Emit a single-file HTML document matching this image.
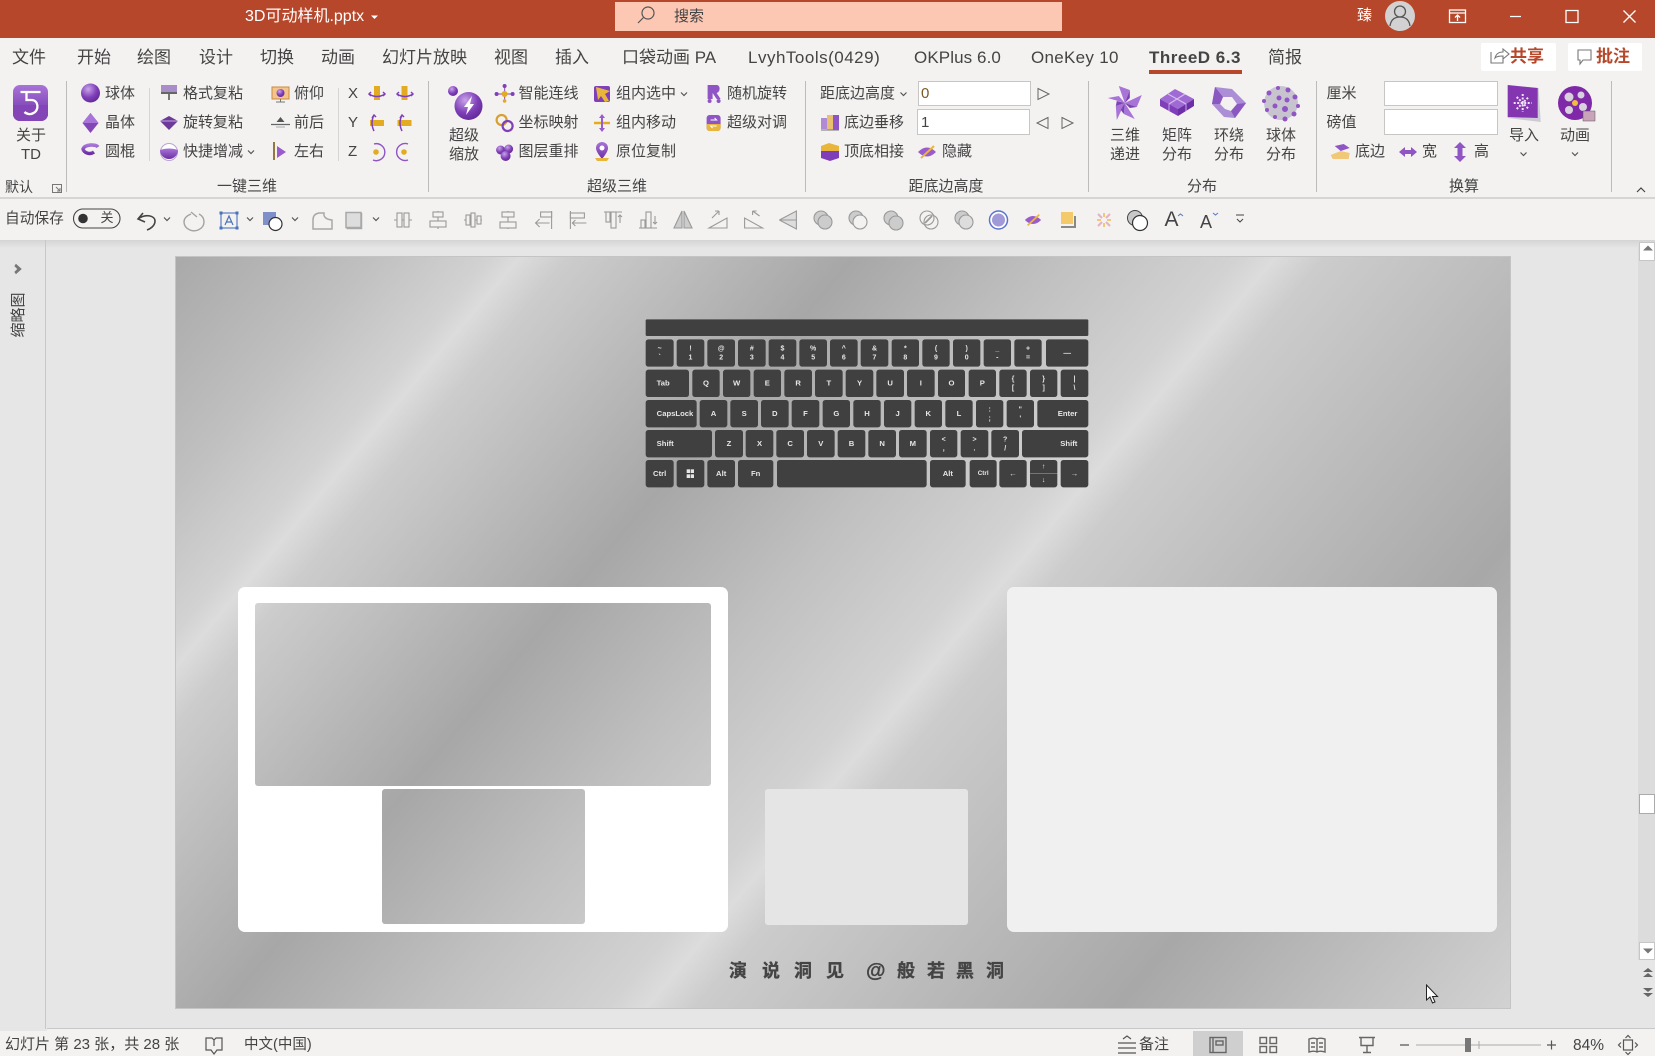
<!DOCTYPE html>
<html lang="zh-CN"><head><meta charset="utf-8"><title>3D可动样机.pptx</title>
<style>
html,body{margin:0;padding:0;width:1655px;height:1056px;overflow:hidden;background:#e6e6e6}
body{position:relative;font-family:"Liberation Sans","Noto Sans CJK SC",sans-serif;color:#444}
.a{position:absolute}
.t{position:absolute;white-space:nowrap;font-size:15px;line-height:20px;color:#444}
.c{transform:translateX(-50%)}
.y1{top:84px}.y2{top:113px}.y3{top:142px}.y4{top:126px}.y5{top:145px}.g{top:176.500px}
.tab{position:absolute;top:46.500px;font-size:17px;line-height:22px;white-space:nowrap;color:#444}
.box{position:absolute;background:#fff;border:1px solid #c8c6c4;box-sizing:border-box}
.v{position:absolute;width:1px;background:#bdbbb9}
.bgc{background:linear-gradient(130deg,#a9a9a9 0,#c0c0c0 10%,#d2d2d2 16%,#dcdcdc 17.500%,#cccccc 20%,#a7a7a7 34.500%,#c0c0c0 45%,#d2d2d2 54%,#dcdcdc 56%,#cccccc 58.500%,#a8a8a8 80%,#d2d2d2 100%);background-size:1334px 751px;background-repeat:no-repeat}
#kb{position:absolute;left:630px;top:310px;width:1410px;height:570px;transform:scale(.33333);transform-origin:0 0}
.k{position:absolute;background:#404040;border-radius:8px;color:#e6e6e6;font:bold 23px/80px "Liberation Sans",sans-serif;text-align:center;box-sizing:border-box}
.k.d{font-size:21px;line-height:27px;padding-top:14px}
.k i{position:absolute;background:#e6e6e6;width:10px;height:11px}
.r1{top:88px;height:82px}.r2{top:179px;height:82px}.r3{top:270px;height:82px}.r4{top:360px;height:82px}.r5{top:450px;height:82px}
.sl{position:absolute;font-weight:bold;font-size:18px;line-height:22px;color:#444;top:960px;-webkit-text-stroke:.3px #444}
#ov{position:absolute;left:0;top:0}
</style></head><body>
<!-- workspace -->
<div class="a" style="left:0;top:240px;width:1655px;height:8px;background:linear-gradient(#d4d4d4,#e6e6e6)"></div>
<div class="a" style="left:45px;top:240px;width:1px;height:791px;background:#c8c8c8"></div>
<div class="a" style="left:47px;top:1028px;width:1608px;height:1px;background:#c8c8c8"></div>
<div class="a" style="left:1638px;top:242px;width:17px;height:718px;background:#dcdcdc"></div>
<div class="box" style="left:1639px;top:242px;width:16px;height:19px"></div>
<div class="box" style="left:1639px;top:794px;width:16px;height:20px;border-color:#aaa"></div>
<div class="box" style="left:1639px;top:942px;width:16px;height:18px"></div>
<!-- slide -->
<div class="a bgc" style="left:176px;top:257px;width:1333.500px;height:751px;outline:1px solid #c4c4c4"></div>
<div class="a" style="left:237.500px;top:587px;width:490.500px;height:344.500px;background:#fff;border-radius:7px"></div>
<div class="a bgc" style="left:255px;top:602.500px;width:456px;height:183px;border-radius:3px;background-position:-79px -345.500px"></div>
<div class="a bgc" style="left:381.500px;top:789px;width:203px;height:135px;border-radius:3px;background-position:-205.500px -532px"></div>
<div class="a" style="left:765px;top:789px;width:203px;height:136px;background:#e5e5e5;border-radius:3px"></div>
<div class="a" style="left:1006.500px;top:587px;width:490px;height:344.500px;background:#f0f0f0;border-radius:7px"></div>
<div id="kb">
<b class="k" style="left:47px;top:28px;width:1328px;height:50px;border-radius:4px"></b>
<b class="k d r1" style="left:47px;width:84px">~<br>`</b><b class="k d r1" style="left:140px;width:83px">!<br>1</b><b class="k d r1" style="left:232px;width:83px">@<br>2</b><b class="k d r1" style="left:324px;width:83px">#<br>3</b><b class="k d r1" style="left:416px;width:83px">$<br>4</b><b class="k d r1" style="left:508px;width:83px">%<br>5</b><b class="k d r1" style="left:600px;width:83px">^<br>6</b><b class="k d r1" style="left:692px;width:83px">&amp;<br>7</b><b class="k d r1" style="left:785px;width:82px">*<br>8</b><b class="k d r1" style="left:877px;width:82px">(<br>9</b><b class="k d r1" style="left:969px;width:82px">)<br>0</b><b class="k d r1" style="left:1061px;width:82px">_<br>-</b><b class="k d r1" style="left:1153px;width:82px">+<br>=</b><b class="k r1" style="left:1248px;width:127px">—</b>
<b class="k r2" style="left:47px;width:130px;text-align:left;padding-left:33px">Tab</b><b class="k r2" style="left:187px;width:82px">Q</b><b class="k r2" style="left:279px;width:82px">W</b><b class="k r2" style="left:371px;width:82px">E</b><b class="k r2" style="left:463px;width:83px">R</b><b class="k r2" style="left:555px;width:83px">T</b><b class="k r2" style="left:647px;width:83px">Y</b><b class="k r2" style="left:739px;width:83px">U</b><b class="k r2" style="left:831px;width:83px">I</b><b class="k r2" style="left:924px;width:81px">O</b><b class="k r2" style="left:1016px;width:82px">P</b><b class="k d r2" style="left:1108px;width:82px">{<br>[</b><b class="k d r2" style="left:1200px;width:82px">}<br>]</b><b class="k d r2" style="left:1292px;width:83px">|<br>\</b>
<b class="k r3" style="left:47px;width:153px;text-align:left;padding-left:33px">CapsLock</b><b class="k r3" style="left:209px;width:83px">A</b><b class="k r3" style="left:301px;width:83px">S</b><b class="k r3" style="left:393px;width:83px">D</b><b class="k r3" style="left:485px;width:83px">F</b><b class="k r3" style="left:578px;width:82px">G</b><b class="k r3" style="left:670px;width:82px">H</b><b class="k r3" style="left:762px;width:82px">J</b><b class="k r3" style="left:854px;width:82px">K</b><b class="k r3" style="left:946px;width:82px">L</b><b class="k d r3" style="left:1038px;width:82px">:<br>;</b><b class="k d r3" style="left:1130px;width:82px">"<br>'</b><b class="k r3" style="left:1222px;width:153px;text-align:right;padding-right:33px">Enter</b>
<b class="k r4" style="left:47px;width:199px;text-align:left;padding-left:33px">Shift</b><b class="k r4" style="left:255px;width:84px">Z</b><b class="k r4" style="left:347px;width:83px">X</b><b class="k r4" style="left:439px;width:83px">C</b><b class="k r4" style="left:531px;width:83px">V</b><b class="k r4" style="left:623px;width:83px">B</b><b class="k r4" style="left:715px;width:83px">N</b><b class="k r4" style="left:807px;width:83px">M</b><b class="k d r4" style="left:900px;width:82px">&lt;<br>,</b><b class="k d r4" style="left:992px;width:83px">&gt;<br>.</b><b class="k d r4" style="left:1084px;width:83px">?<br>/</b><b class="k r4" style="left:1176px;width:199px;text-align:right;padding-right:33px">Shift</b>
<b class="k r5" style="left:47px;width:84px">Ctrl</b><b class="k r5" style="left:140px;width:83px"><i style="left:30px;top:28px"></i><i style="left:42px;top:28px"></i><i style="left:30px;top:43px"></i><i style="left:42px;top:43px"></i></b><b class="k r5" style="left:232px;width:83px">Alt</b><b class="k r5" style="left:324px;width:106px">Fn</b><b class="k r5" style="left:441px;width:449px"></b><b class="k r5" style="left:900px;width:107px">Alt</b><b class="k r5" style="left:1019px;width:81px;font-size:19px">Ctrl</b><b class="k r5" style="left:1108px;width:82px">←</b><b class="k d r5" style="left:1200px;width:82px;line-height:40px;padding-top:0;background:linear-gradient(#404040 49%,#aaa 49%,#aaa 51%,#404040 51%)">↑<br>↓</b><b class="k r5" style="left:1292px;width:83px">→</b>
</div>
<span class="sl" style="left:729px">演</span><span class="sl" style="left:762px">说</span><span class="sl" style="left:794px">洞</span><span class="sl" style="left:826px">见</span><span class="sl" style="left:866px;font-size:20px">@</span><span class="sl" style="left:897px">般</span><span class="sl" style="left:927px">若</span><span class="sl" style="left:956px">黑</span><span class="sl" style="left:986px">洞</span>

<!-- chrome -->
<div class="a" style="left:0;top:0;width:1655px;height:38px;background:#b7472a"></div>
<div class="a" style="left:0;top:38px;width:1655px;height:159px;background:#f3f2f1"></div>
<div class="a" style="left:0;top:197px;width:1655px;height:2px;background:#d6d5d4"></div>
<div class="a" style="left:0;top:199px;width:1655px;height:41px;background:#f3f2f1"></div>
<div class="a" style="left:0;top:1029px;width:1655px;height:27px;background:#f3f2f1"></div>
<div class="a" style="left:0;top:1029px;width:47px;height:2px;background:#e6e6e6"></div>
<div class="a" style="left:1193px;top:1031px;width:50px;height:25px;background:#cfcfcf"></div>
<div class="a" style="left:615px;top:2px;width:447px;height:29px;background:#fcc7b3"></div>
<span class="t" style="left:245px;top:6.500px;color:#fff;font-size:16px">3D可动样机.pptx</span>
<span class="t" style="left:674px;top:7px">搜索</span>
<span class="t" style="left:1357px;top:6px;color:#fff">臻</span>

<span class="tab" style="left:12px">文件</span><span class="tab" style="left:77px">开始</span><span class="tab" style="left:137px">绘图</span><span class="tab" style="left:199px">设计</span><span class="tab" style="left:260px">切换</span><span class="tab" style="left:321px">动画</span><span class="tab" style="left:382px">幻灯片放映</span><span class="tab" style="left:494px">视图</span><span class="tab" style="left:555px">插入</span><span class="tab" style="left:622px">口袋动画 PA</span><span class="tab" style="left:748px;letter-spacing:.5px">LvyhTools(0429)</span><span class="tab" style="left:914px;letter-spacing:.1px">OKPlus 6.0</span><span class="tab" style="left:1031px;letter-spacing:.3px">OneKey 10</span><span class="tab" style="left:1149px;font-weight:bold;letter-spacing:.5px">ThreeD 6.3</span><span class="tab" style="left:1268px">简报</span>
<div class="a" style="left:1149px;top:70px;width:93px;height:4px;background:#b7472a"></div>
<div class="a" style="left:1481px;top:43px;width:75px;height:28px;background:#fff;border-radius:2px"></div>
<div class="a" style="left:1568px;top:43px;width:74px;height:28px;background:#fff;border-radius:2px"></div>
<span class="tab" style="left:1510px;color:#b7472a;font-weight:bold;top:46px">共享</span><span class="tab" style="left:1596px;color:#b7472a;font-weight:bold;top:46px">批注</span>

<div class="v" style="left:66px;top:81px;height:111px"></div><div class="v" style="left:149px;top:88px;height:73px;background:#d6d5d4"></div><div class="v" style="left:338px;top:88px;height:73px;background:#d6d5d4"></div><div class="v" style="left:428px;top:81px;height:111px"></div><div class="v" style="left:805px;top:81px;height:111px"></div><div class="v" style="left:1088px;top:81px;height:111px"></div><div class="v" style="left:1316px;top:81px;height:111px"></div><div class="v" style="left:1611px;top:81px;height:111px"></div>

<span class="t c y4" style="left:31px">关于</span><span class="t c y5" style="left:31px">TD</span><span class="t g" style="left:5px;font-size:14px">默认</span>
<span class="t y1" style="left:105px">球体</span><span class="t y2" style="left:105px">晶体</span><span class="t y3" style="left:105px">圆棍</span>
<span class="t y1" style="left:183px">格式复粘</span><span class="t y2" style="left:183px">旋转复粘</span><span class="t y3" style="left:183px">快捷增减</span>
<span class="t y1" style="left:294px">俯仰</span><span class="t y2" style="left:294px">前后</span><span class="t y3" style="left:294px">左右</span>
<span class="t y1" style="left:348px">X</span><span class="t y2" style="left:348px">Y</span><span class="t y3" style="left:348px">Z</span>
<span class="t c g" style="left:247px">一键三维</span>
<span class="t c y4" style="left:464px">超级</span><span class="t c y5" style="left:464px">缩放</span>
<span class="t y1" style="left:518.500px">智能连线</span><span class="t y2" style="left:518.500px">坐标映射</span><span class="t y3" style="left:518.500px">图层重排</span>
<span class="t y1" style="left:616px">组内选中</span><span class="t y2" style="left:616px">组内移动</span><span class="t y3" style="left:616px">原位复制</span>
<span class="t y1" style="left:727px">随机旋转</span><span class="t y2" style="left:727px">超级对调</span>
<span class="t c g" style="left:617px">超级三维</span>
<span class="t y1" style="left:820px">距底边高度</span><span class="t y2" style="left:844px">底边垂移</span><span class="t y3" style="left:844px">顶底相接</span><span class="t y3" style="left:942px">隐藏</span>
<div class="box" style="left:918px;top:81px;width:113px;height:25px"></div><div class="box" style="left:917px;top:109px;width:113px;height:26px"></div>
<span class="t y1" style="left:921px;color:#7a5a20">0</span><span class="t y2" style="left:921px">1</span>
<span class="t c g" style="left:946px">距底边高度</span>
<span class="t c y4" style="left:1125px">三维</span><span class="t c y5" style="left:1125px">递进</span><span class="t c y4" style="left:1177px">矩阵</span><span class="t c y5" style="left:1177px">分布</span><span class="t c y4" style="left:1229px">环绕</span><span class="t c y5" style="left:1229px">分布</span><span class="t c y4" style="left:1281px">球体</span><span class="t c y5" style="left:1281px">分布</span>
<span class="t c g" style="left:1202px">分布</span>
<span class="t y1" style="left:1326.500px">厘米</span><span class="t y2" style="left:1326.500px">磅值</span>
<div class="box" style="left:1384px;top:81px;width:114px;height:25px"></div><div class="box" style="left:1384px;top:109px;width:114px;height:26px"></div>
<span class="t y3" style="left:1355px">底边</span><span class="t y3" style="left:1422px">宽</span><span class="t y3" style="left:1474px">高</span>
<span class="t c y4" style="left:1524px">导入</span><span class="t c y4" style="left:1575px">动画</span>
<span class="t c g" style="left:1464px">换算</span>
<span class="t" style="left:5px;top:208.500px;font-size:14.700px">自动保存</span>
<span class="t c" style="left:107px;top:208px;font-size:13px">关</span>
<span class="a" style="left:1164.500px;top:207.500px;font:21px/24px 'Liberation Sans',sans-serif;color:#444">A</span><span class="a" style="left:1200px;top:210px;font:18px/24px 'Liberation Sans',sans-serif;color:#444">A</span>
<span class="a" style="left:19px;top:315px;font-size:15px;line-height:16px;transform:translate(-50%,-50%) rotate(-90deg);white-space:nowrap">缩略图</span>
<span class="t" style="left:5px;top:1035px;font-size:15px">幻灯片 第 23 张，共 28 张</span>
<span class="t" style="left:244px;top:1035px;font-size:14.500px">中文(中国)</span>
<span class="t" style="left:1139px;top:1035px">备注</span>
<span class="t" style="left:1573px;top:1035.500px;font-size:15.500px">84%</span>

<svg id="ov" width="1655" height="1056" viewBox="0 0 1655 1056" fill="none">
<defs>
<linearGradient id="p" x1="0" y1="0" x2="0" y2="1"><stop offset="0" stop-color="#a874d8"/><stop offset="1" stop-color="#6d2fa6"/></linearGradient>
<radialGradient id="ps" cx=".38" cy=".3" r=".8"><stop offset="0" stop-color="#c9a4ea"/><stop offset=".55" stop-color="#7f3fb8"/><stop offset="1" stop-color="#5c2490"/></radialGradient>
<path id="ch" d="M-3 -1.500L0 1.500L3 -1.500" stroke="#555" stroke-width="1.200"/>
<g id="gy"><rect x="-7" y="-3" width="14" height="6" fill="#e3ab22"/></g>
<g id="gx"><rect x="-3" y="-7" width="6" height="14" fill="#e3ab22"/></g>
</defs>
<!-- title -->
<path d="M371 15.500h7l-3.500 3.500z" fill="#fff"/>
<g transform="translate(646,15)" stroke="#555" stroke-width="1.200"><circle cx="2" cy="-2" r="6"/><path d="M-2.500 2.500L-8 8"/></g>
<circle cx="1400" cy="16" r="15" fill="#d2d2d2"/><g stroke="#555" stroke-width="1.300"><circle cx="1400" cy="11.500" r="5.500"/><path d="M1390 26c1-7 5-9 10-9s9 2 10 9"/></g>
<g stroke="#fff" stroke-width="1.300"><rect x="1449.500" y="10" width="16" height="12.500"/><path d="M1449.500 13h16M1457.500 21v-5.500M1455 17.500l2.500-2.500 2.500 2.500"/><path d="M1510 16.500h11M1566 10.500h12v12h-12zM1623.500 10.500l12 12M1635.500 10.500l-12 12"/></g>
<!-- share / comment -->
<g stroke="#777" stroke-width="1.100"><path d="M1491 54v11h12v-5M1495 60c1-4 4-6 8-6v-3l6 5-6 5v-3c-3 0-6 0-8 2z" transform="translate(0,-2)"/><path d="M1578 50h13v10h-8l-3 4v-4h-2z"/></g>
<!-- launcher -->
<g stroke="#777"><path d="M52.500 184.500h9v8h-9zM56 187l4 4M60 188v3h-3"/></g>
<path d="M1637 192l4-4 4 4" stroke="#444" stroke-width="1.200"/>
<!-- TD -->
<rect x="13" y="85" width="35" height="36" rx="7" fill="url(#p)"/><path d="M13 105h35v9a7 7 0 0 1-7 7H20a7 7 0 0 1-7-7z" fill="#8446b6"/>
<g transform="translate(30.500,103)" stroke="#fff" stroke-width="2.300"><path d="M-10 -11H10M-4 -11V-3H1C8 -3 9 7 3 10C0 12 -4 11 -6 9"/></g>
<!-- col2 -->
<circle cx="90.500" cy="93" r="9.500" fill="url(#ps)"/>
<path d="M90.500 113l8 10-8 10-8-10z" fill="#8446b6"/><path d="M90.500 113l-8 10h16z" fill="#a874d8"/>
<path d="M98 147c-2-3-13-3-15 2 1 4 7 6 11 3" stroke="url(#p)" stroke-width="3.500"/>
<!-- col3 -->
<rect x="161" y="85" width="16" height="8" fill="#a98dc9"/><path d="M169 93v7" stroke="#777" stroke-width="2"/><rect x="161" y="92" width="16" height="2" fill="#666"/>
<path d="M169 116l9 5-4 4-5 5-5-5-4-4z" fill="#6d3a9a"/><path d="M160 121h18" stroke="#c4a6e0"/>
<circle cx="169" cy="152" r="8.500" fill="#fff" stroke="#b9a6cc"/><path d="M160 150a9 9 0 0 0 18 0c-6-2-12-2-18 0z" fill="url(#p)"/>
<!-- col4 -->
<rect x="272" y="87" width="17" height="12" fill="#f5c48c" stroke="#c98a3c"/><circle cx="280.500" cy="93" r="4" fill="url(#ps)"/><path d="M280.500 99v3M276 102h9" stroke="#777"/>
<path d="M280.500 117l4 5h-8z" fill="#555"/><path d="M271 124.500h19" stroke="#666" stroke-width="1.200"/><path d="M276 127h9" stroke="#aaa"/>
<path d="M274 142v18" stroke="#8a6a2a" stroke-width="1.800"/><path d="M277 146l9 6-9 6z" fill="#9a5ccc"/>
<!-- xyz icons -->
<use href="#gx" x="377" y="93"/><use href="#gx" x="404.500" y="93"/>
<path d="M369 94q8 5 16 0M371 92l-2 2 2 2M383 96l2-2-2-2M397 94q8 5 16 0M399 92l-2 2 2 2M411 96l2-2-2-2" stroke="#7f3fb8" stroke-width="1.500"/>
<use href="#gy" x="377" y="123"/><use href="#gy" x="404.500" y="123"/>
<path d="M374 115q-4 8 0 16M372 118l2-3 2 2M402 115q-4 8 0 16M400 118l2-3 2 2" stroke="#7f3fb8" stroke-width="1.500"/>
<circle cx="376" cy="152" r="2.800" fill="#e3ab22"/><circle cx="404" cy="152" r="2.800" fill="#e3ab22"/>
<path d="M374 144a8.500 8.500 0 1 1-1 16M408 144a8.500 8.500 0 1 0 0 16" stroke="#8f55c4" stroke-width="1.400"/>
<!-- zoom icon -->
<circle cx="453" cy="91" r="5" fill="url(#ps)"/><circle cx="468.500" cy="106" r="14" fill="url(#ps)"/><path d="M472 96l-8 11h4l-2 8 8-11h-4z" fill="#fff"/>
<!-- col 5 -->
<g transform="translate(504.600,94)"><path d="M0 -8V8M-8 0H8" stroke="#9a6ac8" stroke-width="1.200"/><circle r="3" fill="#e3ab22"/><circle cy="-8" r="2" fill="#7f3fb8"/><circle cx="-8" r="2" fill="#7f3fb8"/><circle cx="8" r="2" fill="#7f3fb8"/><circle cy="7" r="1.800" fill="#e3ab22"/></g>
<g transform="translate(504.600,123)" stroke-width="2.200"><circle cx="-3" cy="-3" r="5" stroke="#d8a030"/><circle cx="3" cy="3" r="5" stroke="#7f3fb8"/></g>
<g transform="translate(504.600,152)"><circle cx="-4" cy="-2" r="4.500" fill="url(#ps)"/><circle cx="4" cy="-3" r="4.500" fill="url(#ps)"/><circle cx="1" cy="4" r="5" fill="url(#ps)"/></g>
<g transform="translate(602,94)"><rect x="-8" y="-8" width="16" height="16" rx="2" fill="#7f3fb8"/><path d="M-6 -7L8 -3L3 0L7 7L3 8L-1 2L-4 6z" fill="#e9b63c"/></g>
<g transform="translate(602,123)"><path d="M-8 0h16" stroke="#e3ab22" stroke-width="2.500"/><path d="M0 -9L3 -5H1V5H3L0 9L-3 5H-1V-5H-3z" fill="#9a5ccc"/></g>
<g transform="translate(602,151)"><path d="M0 8C-5 2 -6 -1 -6 -3A6 6 0 0 1 6 -3C6 -1 5 2 0 8z" fill="url(#p)"/><circle cy="-3" r="2.500" fill="#fff"/><path d="M-7 7h14l-2 3h-10z" fill="#e9b63c"/></g>
<g transform="translate(713.600,94)" fill="#8f55c4"><path d="M-6 -9H3C7 -9 7 -2 3 -1L7 5H3L-1 -1V5H-6z"/><circle cx="-4" cy="7" r="2"/><circle cx="5" cy="7" r="2"/></g>
<g transform="translate(713.600,123)"><rect x="-7" y="-8" width="14" height="16" rx="3" fill="#8f55c4"/><path d="M-7 1h14v4a3 3 0 0 1-3 3h-8a3 3 0 0 1-3-3z" fill="#e9b63c"/><path d="M-3 -3h6l-2-2M3 3h-6l2 2" stroke="#fff"/></g>
<!-- bottom height -->
<g transform="translate(830,123)"><rect x="-9" y="-5" width="6" height="11" fill="#b08ad4"/><rect x="-3" y="-8" width="6" height="15" fill="#e9c070"/><rect x="3" y="-8" width="6" height="15" fill="#8f55c4"/><path d="M-9 7h18" stroke="#777"/></g>
<g transform="translate(830,152)"><path d="M-9 -6L-1 -9L9 -6V-1H-9z" fill="#e9b63c"/><path d="M-9 -1H9V6L0 9L-9 6z" fill="#7f3fb8"/></g>
<g transform="translate(927,152)"><path d="M-9 0Q0 -9 9 0Q0 9 -9 0z" fill="#9a5ccc"/><path d="M-6 6L7 -6" stroke="#e9b63c" stroke-width="2"/></g>
<path d="M1038 88.500l11 5.500-11 5.500zM1048 117.500l-11 5.500 11 5.500zM1062 117.500l11 5.500-11 5.500z" stroke="#666"/>
<use href="#ch" x="251" y="152"/><use href="#ch" x="684" y="94"/><use href="#ch" x="903.500" y="94"/><use href="#ch" x="1523.500" y="154"/><use href="#ch" x="1575" y="154"/>
<!-- distribution -->
<g transform="translate(1124.800,103)"><g fill="#a874d8"><path d="M0 0L-6 -17L5 -13z"/><path d="M0 0L17 -8L12 4z"/><path d="M0 0L10 16L-1 11z"/><path d="M0 0L-8 17L-9 3z"/><path d="M0 0L-17 -5L-6 -7z"/></g><g fill="#7c43b2"><path d="M0 0L5 -13L5 -5z"/><path d="M0 0L12 4L5 5z"/><path d="M0 0L-1 11L-4 7z"/><path d="M0 0L-9 3L-8 -2z"/></g></g>
<g transform="translate(1177,102)"><path d="M-17 -3L-2 -13L17 -3L1 7z" fill="#a06ad4"/><path d="M-17 -3L1 7V14L-17 4z" fill="#7f3fb8"/><path d="M1 7L17 -3V4L1 14z" fill="#6d2fa6"/><path d="M-9 -8L9 2M8 -8L-8 2" stroke="#d6bdf0" stroke-width="1.200"/><path d="M-8 2V9M9 2V9" stroke="#c9a4ea"/></g>
<g transform="translate(1229,103)"><path d="M-14 -16L3 -14L17 0L6 15L-5 14L-17 1z" fill="#ab8ed6"/><path d="M-6 -6L3 -6L8 1L2 8L-4 6L-9 1z" fill="#f3f2f1"/><path d="M-14 -16L-6 -6L-9 1L-17 1zM17 0L8 1L2 8L6 15z" fill="#8a58c0"/></g>
<g transform="translate(1281,103)"><circle r="17" fill="#c8c4cf"/><g fill="#8f55c4"><circle cx="-3" cy="-15" r="2"/><circle cx="7" cy="-13" r="2.500"/><circle cx="14" cy="-6" r="2.500"/><circle cx="17" cy="3" r="2"/><circle cx="13" cy="11" r="2.500"/><circle cx="4" cy="16" r="2.500"/><circle cx="-6" cy="14" r="2"/><circle cx="-14" cy="7" r="2"/><circle cx="-17" cy="-2" r="2"/><circle cx="-12" cy="-10" r="2.500"/><circle cx="-2" cy="-5" r="2.500"/><circle cx="6" cy="-3" r="2.500"/><circle cx="-6" cy="3" r="2.500"/><circle cx="4" cy="6" r="3"/></g></g>
<!-- bottom row -->
<g transform="translate(1340.700,152)"><path d="M-6 -6L3 -8L9 -4L0 -1z" fill="#8f55c4"/><path d="M-10 3L0 -1L9 1L8 7L-8 7z" fill="#f0c878"/></g>
<g transform="translate(1408,152)" fill="#8f55c4"><path d="M-9 0L-3 -5V-2H3V-5L9 0L3 5V2H-3V5z"/></g>
<g transform="translate(1460,152)" fill="#8f55c4"><path d="M0 -10L6 -4H2.500V4H6L0 10L-6 4H-2.500V-4H-6z"/></g>
<!-- import / anim -->
<g transform="translate(1523.700,103)"><path d="M-16 -17L15 -15L17 19L-16 15z" fill="#cfcbd6"/><path d="M-16 -18L14 -15V15L-16 14z" fill="#8436b0"/><g stroke="#f0e4f8" stroke-width="2"><path d="M-1 -9V9M-10 0H8M-7 -6L5 6M-7 6L5 -6" stroke-dasharray="2 1.500"/></g></g>
<g transform="translate(1575,103)"><circle r="17" fill="#7f28a8"/><circle cx="-6" cy="-6" r="4.500" fill="#d8d0dc"/><circle cx="6" cy="-8" r="3.500" fill="#d8d0dc"/><circle cx="-6" cy="7" r="4" fill="#d8d0dc"/><circle cx="8" cy="4" r="4" fill="#d8d0dc"/><circle cx="0" cy="0" r="3" fill="#f0bd40"/><rect x="8" y="8" width="12" height="10" fill="#c9a4b8" stroke="#555" stroke-width=".5"/></g>
<!-- QAT -->
<rect x="73.500" y="209" width="46.500" height="19" rx="9.500" stroke="#444" stroke-width="1.100"/><circle cx="83" cy="218.500" r="4.800" fill="#333"/>
<path d="M143 213L138 219L145 222M138 219C146 213 155 216 155 221C155 226 150 229 147 230" stroke="#444" stroke-width="1.600"/>
<use href="#ch" x="167" y="219"/><use href="#ch" x="250" y="219"/><use href="#ch" x="295" y="219"/><use href="#ch" x="376" y="219"/>
<path d="M191 214C186 216 184 219 184 222A10 9 0 1 0 199 214M191 212L197 217" stroke="#a3a3a3" stroke-width="1.400"/>
<rect x="221" y="213" width="16" height="15" stroke="#5a7fc0" stroke-width="1.200"/><g fill="#4a72b8"><rect x="219.500" y="211.500" width="3" height="3"/><rect x="235.500" y="211.500" width="3" height="3"/><rect x="219.500" y="226.500" width="3" height="3"/><rect x="235.500" y="226.500" width="3" height="3"/></g><path d="M225 225l4-9 4 9M226.500 222h5" stroke="#4a72b8" stroke-width="1.200"/>
<rect x="263" y="212" width="13" height="13" fill="#7f8fc8"/><circle cx="275.500" cy="224" r="6.500" fill="#fff" stroke="#333" stroke-width="1.200"/>
<g stroke="#a8a8a8" stroke-width="1.500"><path d="M313 229v-9q0-6 6-7h5q-1 6 8 7v9z"/><rect x="346" y="212.500" width="15" height="15" fill="#ddd"/><path d="M361.500 213v15.500h-15"/>
</g><g stroke="#999" stroke-width="1.100">
<g transform="translate(403,220)"><path d="M-9 0h18"/><rect x="-6" y="-7" width="5" height="14" fill="#f3f2f1"/><rect x="1" y="-7" width="5" height="14" fill="#f3f2f1"/></g>
<g transform="translate(438,220)"><path d="M0 -9v18"/><rect x="-5" y="-8" width="10" height="5" fill="#f3f2f1"/><rect x="-8" y="1" width="16" height="6" fill="#f3f2f1"/></g>
<g transform="translate(473,220)"><path d="M-9 0h18"/><rect x="-7" y="-5" width="4" height="10" fill="#f3f2f1"/><rect x="-2" y="-7" width="4" height="14" fill="#f3f2f1"/><rect x="4" y="-4" width="4" height="8" fill="#f3f2f1"/></g>
<g transform="translate(508,220)"><path d="M0 -9v18"/><rect x="-6" y="-8" width="12" height="5" fill="#f3f2f1"/><rect x="-8" y="2" width="16" height="6" fill="#f3f2f1"/></g>
<g transform="translate(543.600,220)"><path d="M8 -9v18"/><rect x="-3" y="-8" width="11" height="5" fill="#f3f2f1"/><path d="M-8 3h14M-4 -1l-4 4 4 4"/></g>
<g transform="translate(578.400,220)"><path d="M-8 -9v18"/><rect x="-8" y="-7" width="14" height="5" fill="#f3f2f1"/><path d="M-6 3h14M-3 0l-3 3 3 3"/></g>
<g transform="translate(613,220)"><path d="M-9 -8h18"/><rect x="-7" y="-8" width="4" height="10" fill="#f3f2f1"/><rect x="-2" y="-8" width="5" height="16" fill="#f3f2f1"/><path d="M7 -5v8M5 -3l2-2 2 2"/></g>
<g transform="translate(648,220)"><path d="M-9 8h18"/><rect x="-7" y="0" width="4" height="8" fill="#f3f2f1"/><rect x="-2" y="-8" width="5" height="16" fill="#f3f2f1"/><path d="M7 -4v8M5 2l2 2 2-2"/></g>
<g transform="translate(683,220)"><path d="M-1 -9L-9 8H-1zM1 -9L9 8H1z" fill="#ccc"/></g>
<g transform="translate(718,220)"><path d="M-9 8H9V-2zM-6 -2L1 -9M1 -9H-3M1 -9V-5" fill="none"/></g>
<g transform="translate(753.600,220)"><path d="M9 8H-9V-2zM6 -4L-1 -9M-1 -9H3M-1 -9V-5"/></g>
<g transform="translate(788.400,220)"><path d="M-9 0L8 -9V0zM-9 0L8 9V0z" fill="#ddd"/></g>
<g transform="translate(823,220)"><circle cx="-2" cy="-2" r="7" fill="#ccc"/><circle cx="2" cy="2" r="7" fill="#ccc"/></g>
<g transform="translate(858,220)"><circle cx="-2" cy="-2" r="7" fill="#ccc"/><circle cx="2" cy="2" r="7" fill="#f3f2f1"/></g>
<g transform="translate(893,220)"><circle cx="-2" cy="-2" r="7" fill="#ccc"/><circle cx="3" cy="3" r="7" fill="#ccc"/></g>
<g transform="translate(929,220)"><circle cx="-2" cy="-2" r="7" fill="#f3f2f1"/><circle cx="2" cy="2" r="7"/><path d="M-4 3L3 -4" stroke-width="1.800"/></g>
<g transform="translate(964,220)"><circle cx="-2" cy="-2" r="7" fill="#ccc"/><circle cx="2" cy="2" r="7" fill="#ddd"/></g>
</g>
<circle cx="998.500" cy="220" r="9" fill="#fff" stroke="#5b74cc" stroke-width="1.500"/><circle cx="998.500" cy="220" r="6.500" fill="#a09ad8"/>
<g transform="translate(1033,220) scale(.9)"><path d="M-9 0Q0 -9 9 0Q0 9 -9 0z" fill="#9a5ccc"/><path d="M-6 6L7 -6" stroke="#e9b63c" stroke-width="2"/></g>
<rect x="1061" y="212" width="12" height="12" fill="#f3c969"/><path d="M1075 216v11h-14" stroke="#888" stroke-width="2"/>
<g transform="translate(1104,220)" stroke="#e3b0c4" stroke-width="2"><path d="M-6 -6L-2 -2M6 -6L2 -2M-6 6L-2 2M6 6L2 2"/><path d="M0 -7V-3M7 0H3M-7 0H-3M0 7V3" stroke="#f0c878"/></g>
<circle cx="1135" cy="218" r="7.500" fill="#c8c8c8" stroke="#444"/><circle cx="1140" cy="223" r="7.500" fill="#fff" stroke="#333" stroke-width="1.200"/>
<path d="M1178 216l2.500-2 2.500 2" stroke="#5a7fc0" stroke-width="1.100"/><path d="M1213 213l2.500 2 2.500-2" stroke="#5a7fc0" stroke-width="1.100"/>
<path d="M1236 215h8M1237 219l3 3 3-3" stroke="#444"/>
<!-- pane & scroll -->
<path d="M16 264.500l5 4.500-5 4.500-1-1.500 3-3-3-3z" fill="#777" stroke="#777"/>
<path d="M1648 245.500l5 5h-10z" fill="#777"/><path d="M1648 953.500l5-5h-10z" fill="#777"/>
<path d="M1648 968l5 4h-10zM1648 973l5 4h-10zM1648 997l5-4h-10zM1648 992l5-4h-10z" fill="#666"/>
<!-- status -->
<path d="M206 1038h6l2 2 2-2h6v12l-5 0-3 4-3-4h-5zM214 1040v6" stroke="#555" stroke-width="1.200"/>
<path d="M1118 1043h18M1118 1048h18M1118 1053h18M1123 1039l4-3 4 3" stroke="#555" stroke-width="1.200"/>
<g stroke="#666" stroke-width="1.400"><rect x="1210" y="1037.500" width="16" height="15"/><path d="M1213 1037.500v15"/><rect x="1216" y="1041" width="7" height="4"/>
<rect x="1260" y="1037.500" width="6.500" height="6"/><rect x="1270" y="1037.500" width="6.500" height="6"/><rect x="1260" y="1046.500" width="6.500" height="6"/><rect x="1270" y="1046.500" width="6.500" height="6"/>
<path d="M1317 1039c-2-1-5-1-8 0v13c3-1 6-1 8 0 2-1 5-1 8 0v-13c-3-1-6-1-8 0zM1317 1039v13M1311 1043h4M1311 1047h4M1319 1043h4M1319 1047h4"/>
<path d="M1359 1037.500h16M1361 1037.500v8h12v-8M1367 1045.500v7M1363 1052.500h8"/></g>
<path d="M1400 1045h9M1547 1045h9M1551.500 1040.500v9" stroke="#555" stroke-width="1.200"/>
<path d="M1416 1045h125" stroke="#aaa"/><rect x="1465" y="1038" width="6" height="14" fill="#777"/><path d="M1479 1041v8" stroke="#aaa"/>
<g stroke="#555" stroke-width="1.200"><rect x="1623.500" y="1040" width="9" height="10"/><path d="M1621 1042.500l-2.500 2.500 2.500 2.500M1635 1042.500l2.500 2.500-2.500 2.500M1625.500 1038l2.500-2.500 2.500 2.500M1625.500 1052l2.500 2.500 2.500-2.500"/></g>
<!-- cursor -->
<path d="M1426.500 985v15l3.500-3 2.500 6 2.500-1-2.500-5.500h5z" fill="#fff" stroke="#222" stroke-width="1"/>
</svg>
</body></html>
